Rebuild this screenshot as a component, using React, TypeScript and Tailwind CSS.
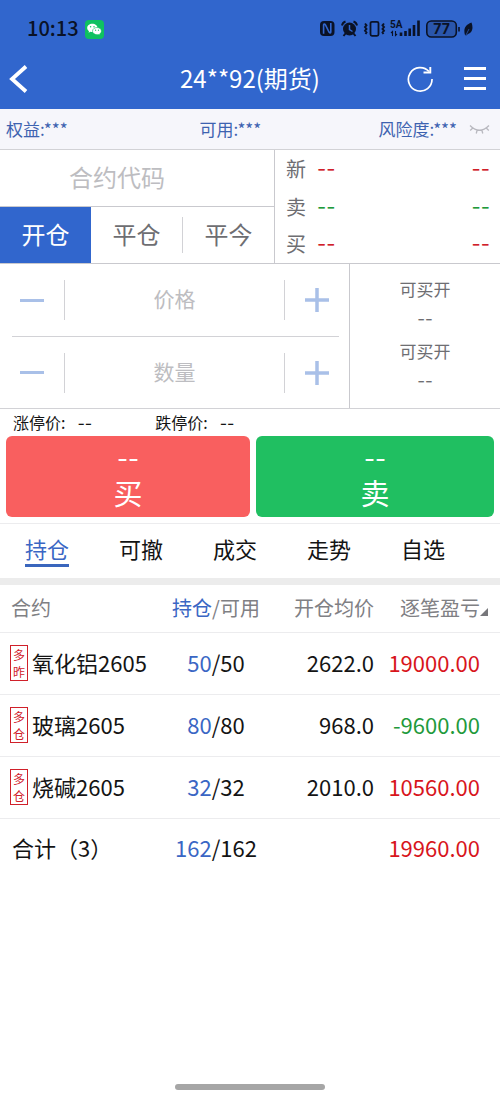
import React from "react";

const CJK = "font-['Noto_Sans_CJK_SC',sans-serif]";

function StatusIcons() {
  return (
    <svg width="142" height="20" viewBox="0 0 142 20" fill="none" stroke="#0a1226" aria-hidden="true">
      <rect x="0" y="2" width="14.500" height="15" rx="4" fill="#0a1226" stroke="none" />
      <path d="M3.600 14.800Q3.600 8 3.600 5.800Q4.200 4.200 5.500 6L9 13Q10.700 15 10.800 13V4" stroke="#3166cd" strokeWidth="1.600" />
      <circle cx="29.500" cy="10" r="6.500" fill="#0a1226" stroke="none" />
      <path d="M22 6.500Q22.500 3.500 25.500 2.500M37 6.500Q36.500 3.500 33.500 2.500M25.500 14.500L23.500 17M33.500 14.500L35.500 17" strokeWidth="2" />
      <path d="M29.500 6V10.500L32.500 12.500" stroke="#3166cd" strokeWidth="1.500" />
      <rect x="50.500" y="2.800" width="8" height="14" rx="1.500" strokeWidth="1.800" />
      <path d="M45 4.500l1.500 1.800-1.500 1.800 1.500 1.800-1.500 1.800 1.500 1.800-1 1.500M64 4.500l-1.500 1.800 1.500 1.800-1.500 1.800 1.500 1.800-1.500 1.800 1 1.500" strokeWidth="1.900" />
      <path d="M72.500 17v-4.500l-1.500 1.500M75.500 12v4.500l1.500-1.500" strokeWidth="1.100" />
      <path d="M81 17v-3.500M85.500 17v-5M89.700 17V9.500M94 17V6M98.500 17V1.500" strokeWidth="2.600" />
      <text x="70" y="9" fill="#0a1226" stroke="none" fontSize="10" fontWeight="700" fontFamily="Roboto, sans-serif">5A</text>
      <rect x="106.800" y="2" width="29.500" height="16" rx="4.500" fill="#2a56ac" strokeWidth="1.600" />
      <path d="M139 8v4.500" strokeWidth="1.600" />
      <text x="121.500" y="15" textAnchor="middle" fill="#0a1226" stroke="none" fontSize="14" fontWeight="700" fontFamily="Inter, sans-serif">77</text>
    </svg>
  );
}

function Leaf() {
  return (
    <svg width="9" height="14" viewBox="0 0 9 14" aria-hidden="true">
      <path d="M7.500 0.500C9.300 5 8.800 11 4 12L2.200 13.500L1 13C-0.600 8 0.500 3 7.500 0.500Z" fill="#0a1226" />
      <path d="M2 13L5 7" stroke="#3166cd" strokeWidth="0.700" />
    </svg>
  );
}

function WeChat() {
  return (
    <svg width="19" height="19" viewBox="0 0 19 19" aria-hidden="true">
      <rect width="19" height="19" rx="4" fill="#0fc160" />
      <path d="M7.300 3.800C4.400 3.800 2.200 5.600 2.200 8c0 1.300.7 2.400 1.800 3.200l-.4 1.500 1.800-.9c.6.200 1.200.3 1.900.3 2.900 0 5.200-1.800 5.200-4.100S10.200 3.800 7.300 3.800Z" fill="#fff" />
      <path d="M12 7.500c-2.500 0-4.500 1.600-4.500 3.600s2 3.600 4.500 3.600c.5 0 1-.1 1.500-.2l1.500.8-.4-1.300c1.100-.7 1.800-1.700 1.800-2.900 0-2-1.900-3.600-4.400-3.600Z" fill="#fff" stroke="#0fc160" strokeWidth="0.600" />
      <g fill="#0fc160"><circle cx="5.600" cy="6.700" r="0.700" /><circle cx="9" cy="6.700" r="0.700" /><circle cx="10.600" cy="10.200" r="0.600" /><circle cx="13.500" cy="10.200" r="0.600" /></g>
    </svg>
  );
}

function Dashes({ className = "" }: { className?: string }) {
  return <span className={`font-['Inter',sans-serif] ${className}`}>--</span>;
}

const quotes = [
  { label: "新", tone: "text-[#d0202a]" },
  { label: "卖", tone: "text-[#1f9a3c]" },
  { label: "买", tone: "text-[#d0202a]" },
];

function Stepper({ label }: { label: string }) {
  return (
    <div className="flex h-full items-center">
      <button aria-label={`${label}减`} className="flex h-10 w-[53px] items-center justify-center border-r border-[#d2d2d6] pr-3">
        <span className="h-[3px] w-6 bg-[#a9c0e8]" />
      </button>
      <input
        aria-label={label}
        placeholder={label}
        className="h-10 min-w-0 flex-1 bg-transparent pb-1 text-center text-[21px] outline-none placeholder:text-[#bdbdc1]"
      />
      <button aria-label={`${label}加`} className="flex h-10 w-[55px] items-center justify-center border-l border-[#d2d2d6] pl-2.5">
        <svg width="24" height="24" viewBox="0 0 24 24" aria-hidden="true">
          <path d="M0 12H24M12 0V24" stroke="#a9c0e8" strokeWidth="3.500" />
        </svg>
      </button>
    </div>
  );
}

const rows = [
  { tag: ["多", "昨"], name: "氧化铝2605", held: "50", free: "50", avg: "2622.0", pnl: "19000.00", tone: "text-[#d8141c]" },
  { tag: ["多", "仓"], name: "玻璃2605", held: "80", free: "80", avg: "968.0", pnl: "-9600.00", tone: "text-[#1f9a3c]" },
  { tag: ["多", "仓"], name: "烧碱2605", held: "32", free: "32", avg: "2010.0", pnl: "10560.00", tone: "text-[#d8141c]" },
];

const tabs = ["持仓", "可撤", "成交", "走势", "自选"];

export default function App() {
  return (
    <div className={`${CJK} flex min-h-screen flex-col overflow-hidden bg-white text-[#141414]`}>
      <header className="bg-[#3166cd]">
        <div className="flex h-14 items-center justify-between px-[27px] pt-0.5">
          <div className="flex items-center gap-1.5">
            <span className="pb-0.5 text-xl leading-6 font-medium text-[#0a1226]">10:13</span>
            <WeChat />
          </div>
          <div className="flex items-center gap-0.5">
            <StatusIcons />
            <Leaf />
          </div>
        </div>
        <div className="grid h-[53px] grid-cols-[1fr_auto_1fr] items-center px-2 pb-2 text-white">
          <button aria-label="返回" className="w-8">
            <svg width="20" height="28" viewBox="0 0 20 28" fill="none" aria-hidden="true">
              <path d="M18 1.500L4 14L18 26.500" stroke="#fff" strokeWidth="3.800" />
            </svg>
          </button>
          <h1 className="pb-0.5 text-2xl leading-8">24**92(期货)</h1>
          <div className="flex items-center justify-end gap-[30px] pr-1.5">
            <button aria-label="刷新">
              <svg width="28" height="28" viewBox="0 0 28 28" fill="none" stroke="#fff" aria-hidden="true">
                <path d="M23 6.500A11.800 11.800 0 1 0 26 14" strokeWidth="1.700" />
                <path d="M24.300 2V7.500H17.500" strokeWidth="1.900" />
              </svg>
            </button>
            <button aria-label="菜单" className="flex w-[22px] flex-col gap-[7px]">
              <span className="h-[3px] bg-white" />
              <span className="h-[3px] bg-white" />
              <span className="h-[3px] bg-white" />
            </button>
          </div>
        </div>
      </header>

      <div className="flex h-[41px] items-center border-b border-[#d2d2d6] bg-[#f6f6fb] pr-2.5 pl-1.5 text-[17px] leading-6 text-[#3d62b0]">
        <span className="w-[40%]">权益:***</span>
        <span className="flex-1">可用:***</span>
        <span className="flex items-center gap-3">
          风险度:***
          <button aria-label="显示金额">
            <svg width="21" height="12" viewBox="0 0 21 12" fill="none" stroke="#b8b8bf" strokeWidth="1.300" aria-hidden="true">
              <path d="M1 2.500Q10.500 12 20 2.500M3.800 5L1.200 7.500M8.200 7L7.200 10.500M12.800 7L13.800 10.500M17.200 5L19.800 7.500" />
            </svg>
          </button>
        </span>
      </div>

      <section className="flex border-b border-[#c9c9ce]">
        <div className="w-[55%] border-r border-[#c9c9ce]">
          <input
            aria-label="合约代码"
            placeholder="合约代码"
            className="block h-14 w-full bg-transparent pr-10 pb-1 text-center text-2xl outline-none placeholder:text-[#bdbdc1]"
          />
          <div className="flex h-[57px] items-center border-t border-[#c9c9ce] text-2xl text-[#6e6e72]">
            <button className="h-full flex-1 bg-[#3166cd] pb-0.5 text-white">开仓</button>
            <button className="h-9 flex-1 border-r border-[#d2d2d6] pb-0.5">平仓</button>
            <button className="h-9 flex-1 pb-0.5">平今</button>
          </div>
        </div>
        <div className="flex flex-1 flex-col pr-2.5 pl-[11px]">
          {quotes.map((q) => (
            <div key={q.label} className="flex flex-1 items-center text-xl leading-6">
              <span className="text-[#6e6e72]">{q.label}</span>
              <Dashes className={`ml-[11px] ${q.tone}`} />
              <Dashes className={`ml-auto ${q.tone}`} />
            </div>
          ))}
        </div>
      </section>

      <section className="flex border-b border-[#d2d2d6]">
        <div className="w-[70%] border-r border-[#c9c9ce] pr-2.5 pl-3">
          <div className="h-[72px]">
            <Stepper label="价格" />
          </div>
          <div className="h-[72px] border-t border-[#d2d2d6]">
            <Stepper label="数量" />
          </div>
        </div>
        <div className="flex flex-1 flex-col items-center pt-[9px] text-[17px] leading-[31px] text-[#6e6e72]">
          <span>可买开</span>
          <Dashes />
          <span>可买开</span>
          <Dashes />
        </div>
      </section>

      <div className="flex h-[27px] items-center gap-[63px] pl-[13px] text-base leading-6">
        <span>涨停价:<Dashes className="ml-3" /></span>
        <span>跌停价:<Dashes className="ml-3" /></span>
      </div>

      <div className="flex gap-1.5 border-b border-[#ececee] px-1.5 pb-1.5 text-white">
        <button className="flex h-[81px] flex-[244] flex-col items-center rounded-md bg-[#f95f5f] pt-[7px]">
          <Dashes className="text-2xl leading-8" />
          <span className="text-[29px] leading-[34px]">买</span>
        </button>
        <button className="flex h-[81px] flex-[238] flex-col items-center rounded-md bg-[#20bf61] pt-[7px]">
          <Dashes className="text-2xl leading-8" />
          <span className="text-[29px] leading-[34px]">卖</span>
        </button>
      </div>

      <nav className="flex h-[61px] border-b-[7px] border-[#ececec] text-[22px] leading-8">
        {tabs.map((t, i) => (
          <button key={t} className="flex w-[18.800%] shrink-0 items-start justify-center pt-2">
            <span className={i === 0 ? "border-b-[3px] border-[#3a66bd] text-[#3a66c4]" : ""}>{t}</span>
          </button>
        ))}
      </nav>

      <table className="w-full table-fixed border-collapse text-[22px] leading-8">
        <colgroup>
          <col className="w-[32%]" />
          <col className="w-[22.400%]" />
          <col className="w-[20.400%]" />
          <col className="w-[25.200%]" />
        </colgroup>
        <thead>
          <tr className="h-[47px] border-b border-[#ececee] text-xl text-[#808084]">
            <th className="pl-[11px] text-left font-normal">合约</th>
            <th className="text-center font-normal whitespace-nowrap">
              <span className="text-[#3a66c4]">持仓</span>/可用
            </th>
            <th className="text-right font-normal whitespace-nowrap">开仓均价</th>
            <th className="pr-3 font-normal whitespace-nowrap">
              <span className="flex items-center justify-end">
                逐笔盈亏
                <svg width="8" height="8" viewBox="0 0 8 8" className="mt-2" aria-hidden="true">
                  <path d="M8 0V8H0Z" fill="#77777b" />
                </svg>
              </span>
            </th>
          </tr>
        </thead>
        <tbody>
          {rows.map((r) => (
            <tr key={r.name} className="h-[62px] border-b border-[#ececee]">
              <td className="pl-2.5">
                <div className="flex items-center gap-1 whitespace-nowrap">
                  <span className="flex w-[18px] flex-col items-center border border-[#d0202a] text-xs leading-[17px] text-[#d0202a]">
                    <span>{r.tag[0]}</span>
                    <span>{r.tag[1]}</span>
                  </span>
                  <span className="pb-0.5">{r.name}</span>
                </div>
              </td>
              <td className="pb-0.5 text-center">
                <span className="text-[#3a66c4]">{r.held}</span>/{r.free}
              </td>
              <td className="pb-0.5 text-right">{r.avg}</td>
              <td className={`pr-5 pb-0.5 text-right ${r.tone}`}>{r.pnl}</td>
            </tr>
          ))}
        </tbody>
        <tfoot>
          <tr className="h-[62px]">
            <td className="pb-1 pl-3">合计（3）</td>
            <td className="pb-1 text-center">
              <span className="text-[#3a66c4]">162</span>/162
            </td>
            <td />
            <td className="pr-5 pb-1 text-right text-[#d8141c]">19960.00</td>
          </tr>
        </tfoot>
      </table>

      <div className="mt-auto flex justify-center pb-[9px]">
        <div className="h-1.5 w-[150px] rounded-full bg-[#a6a6a6]" />
      </div>
    </div>
  );
}
